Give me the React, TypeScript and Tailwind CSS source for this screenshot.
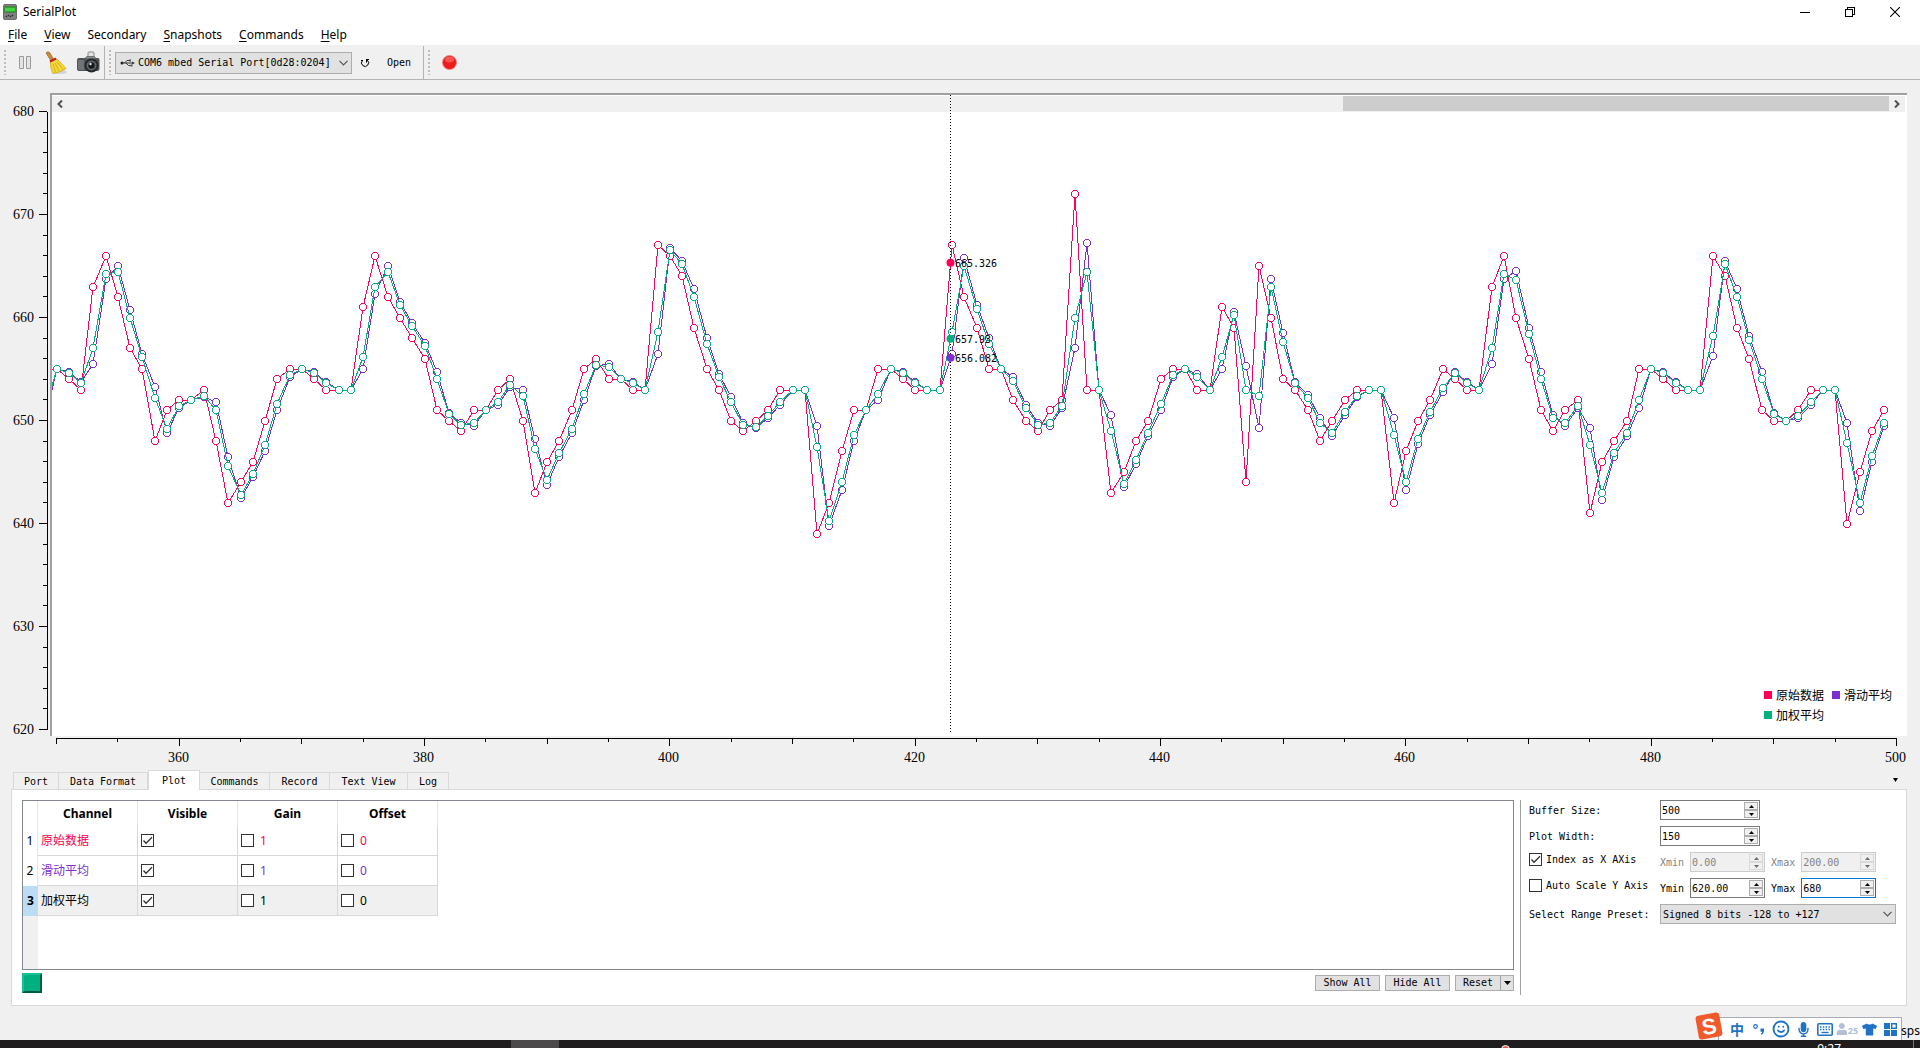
import { useLayoutEffect, useRef, useState } from 'react'
import type { ReactNode } from 'react'
import { FaMicrophone, FaTshirt, FaUser } from 'react-icons/fa'
import { Smile } from 'lucide-react'

const X_MIN = 350
const X_MAX = 500
const Y_MIN = 620
const Y_MAX = 680
const CURSOR_X = 422.88

// Raw readings, the first one belongs to index 348
const raw = [
    648, 655,
    655, 654, 653, 663, 666, 662, 657, 655, 648, 651, 652, 652, 653, 648, 642, 644, 646, 650, 654, 655,
    655, 654, 653, 653, 653, 661, 666, 662, 660, 658, 656, 651, 650, 649, 651, 651, 653, 654, 650, 643,
    646, 648, 651, 655, 656, 654, 654, 653, 653, 667, 666, 664, 659, 655, 653, 650, 649, 650, 651, 653,
    653, 653, 639, 642, 647, 651, 651, 655, 655, 654, 653, 653, 653, 667, 662, 659, 655, 655, 652, 650,
    649, 651, 652, 672, 653, 653, 643, 645, 648, 650, 654, 655, 655, 653, 653, 661, 659, 644, 665, 660,
    654, 653, 651, 648, 650, 652, 653, 653, 653, 642, 647, 650, 652, 655, 654, 653, 653, 663, 666, 660,
    656, 651, 649, 651, 652, 641, 646, 648, 650, 655, 655, 654, 653, 653, 653, 666, 664, 659, 656, 651,
    650, 650, 651, 653, 653, 653, 640, 645, 649, 651
]

const smooth = (weight: number) =>
    raw.slice(1).map((value, i) => ({ x: X_MIN - 1 + i, y: weight * value + (1 - weight) * raw[i] }))

const channels = [
    { name: '原始数据', color: '#ff0056', points: smooth(1), cursor: 665.326 },
    { name: '滑动平均', color: '#7e2dd2', points: smooth(0.25), cursor: 656.082 },
    { name: '加权平均', color: '#00b07f', points: smooth(0.4), cursor: 657.93 }
]

const range = (from: number, to: number, step: number) =>
    Array.from({ length: Math.floor((to - from) / step) + 1 }, (_, i) => from + i * step)

function Plot() {
    const frameRef = useRef<HTMLDivElement>(null)
    const [size, setSize] = useState({ w: 1855, h: 641 })

    useLayoutEffect(() => {
        const el = frameRef.current
        if (!el) return
        const measure = () => setSize({ w: el.clientWidth, h: el.clientHeight })
        measure()
        const observer = new ResizeObserver(measure)
        observer.observe(el)
        return () => observer.disconnect()
    }, [])

    const px = (x: number) => 4.5 + ((x - X_MIN) / (X_MAX - X_MIN)) * (size.w - 15)
    const py = (y: number) => 16.5 + ((Y_MAX - y) / (Y_MAX - Y_MIN)) * (size.h - 23)

    return (
        <section className="grid min-h-0 flex-1 grid-cols-[50px_1fr] grid-rows-[minmax(0,1fr)_34px] pt-[13px] pr-[13px]">
            {/* Y axis */}
            <svg className="h-full w-full overflow-visible" shapeRendering="crispEdges">
                <line x1={47.5} x2={47.5} y1={py(Y_MAX) + 2} y2={py(Y_MIN) + 2} stroke="black" />
                {range(Y_MIN, Y_MAX, 2).map(v => (
                    <line
                        key={v}
                        x1={v % 10 === 0 ? 39 : 43}
                        x2={47}
                        y1={Math.floor(py(v)) + 2.5}
                        y2={Math.floor(py(v)) + 2.5}
                        stroke="black"
                    />
                ))}
                {range(Y_MIN, Y_MAX, 10).map(v => (
                    <text
                        key={v}
                        x={34}
                        y={Math.floor(py(v)) + 7}
                        textAnchor="end"
                        className="font-['Liberation_Serif',serif] text-[14px]"
                    >
                        {v}
                    </text>
                ))}
            </svg>

            <div ref={frameRef} className="relative border-t-2 border-l-2 border-[#a0a0a0] bg-white pt-px">
                {/* Scroll bar */}
                <div className="mr-0.5 flex h-4 items-stretch bg-[#f0f0f0]">
                    <button aria-label="Scroll left" className="grid w-4 place-items-center">
                        <svg width="6" height="8" viewBox="0 0 6 8" fill="none" stroke="#505050" strokeWidth="2">
                            <path d="M5 .5 1.500 4 5 7.500" />
                        </svg>
                    </button>
                    <div className="mb-px flex flex-1 justify-end">
                        <div className="w-[30%] bg-[#cdcdcd]"></div>
                    </div>
                    <button aria-label="Scroll right" className="grid w-4 place-items-center">
                        <svg width="6" height="8" viewBox="0 0 6 8" fill="none" stroke="#505050" strokeWidth="2">
                            <path d="M1 .5 4.500 4 1 7.500" />
                        </svg>
                    </button>
                </div>

                {/* Curves */}
                <svg className="pointer-events-none absolute inset-0 h-full w-full" shapeRendering="crispEdges">
                    {channels.map(ch => (
                        <g key={ch.name} stroke={ch.color}>
                            <polyline
                                fill="none"
                                points={ch.points.map(p => `${Math.round(px(p.x))},${Math.round(py(p.y))}`).join(' ')}
                            />
                            {ch.points.slice(1).map(p => (
                                <circle key={p.x} cx={Math.round(px(p.x))} cy={Math.round(py(p.y))} r="3.5" fill="white" />
                            ))}
                        </g>
                    ))}
                    <line
                        x1={px(CURSOR_X)}
                        x2={px(CURSOR_X)}
                        y1={0}
                        y2={size.h - 4}
                        stroke="black"
                        strokeDasharray="1 2"
                    />
                    {channels.map(ch => (
                        <g key={ch.name}>
                            <circle
                                cx={px(CURSOR_X)}
                                cy={py(ch.cursor)}
                                r="4"
                                fill={ch.color}
                                shapeRendering="geometricPrecision"
                            />
                            <text
                                x={Math.round(px(CURSOR_X)) + 5}
                                y={Math.round(py(ch.cursor)) + 4}
                                className="font-['DejaVu_Sans_Mono',monospace] text-[10px]"
                            >
                                {ch.cursor}
                            </text>
                        </g>
                    ))}
                </svg>

                {/* Legend */}
                <ul className="absolute right-[15px] bottom-[11px] grid grid-cols-[68px_60px] font-['Noto_Sans_CJK_SC',sans-serif] text-[12px] leading-5">
                    {channels.map(ch => (
                        <li key={ch.name} className="flex items-center gap-1">
                            <span className="size-2" style={{ backgroundColor: ch.color }}></span>
                            {ch.name}
                        </li>
                    ))}
                </ul>
            </div>

            {/* X axis */}
            <svg className="col-start-2 h-[34px] w-full overflow-visible" shapeRendering="crispEdges">
                <g transform="translate(2 0)">
                    <line x1={px(X_MIN)} x2={px(X_MAX)} y1={2.5} y2={2.5} stroke="black" />
                    {range(X_MIN, X_MAX, 5).map(v => (
                        <line
                            key={v}
                            x1={Math.floor(px(v)) + 0.5}
                            x2={Math.floor(px(v)) + 0.5}
                            y1={2}
                            y2={v % 20 === 0 ? 10 : v % 10 === 0 ? 8 : 6}
                            stroke="black"
                        />
                    ))}
                    {range(360, X_MAX, 20).map(v => (
                        <text
                            key={v}
                            x={Math.floor(px(v)) - 0.5}
                            y={26}
                            textAnchor="middle"
                            className="font-['Liberation_Serif',serif] text-[14px]"
                        >
                            {v}
                        </text>
                    ))}
                </g>
            </svg>
        </section>
    )
}

function CheckBox({ id, label, defaultChecked }: { id?: string; label?: string; defaultChecked?: boolean }) {
    return (
        <span className="inline-grid size-[13px] shrink-0">
            <input
                type="checkbox"
                id={id}
                aria-label={label}
                defaultChecked={defaultChecked}
                className="peer col-start-1 row-start-1 size-[13px] appearance-none border border-[#333] bg-white"
            />
            <svg
                className="pointer-events-none invisible col-start-1 row-start-1 peer-checked:visible"
                viewBox="0 0 13 13"
                fill="none"
                stroke="#333"
                strokeWidth="1.3"
            >
                <path d="M2.500 6.500 5 9.300 11 3.200" />
            </svg>
        </span>
    )
}

interface SpinBoxProps {
    id: string
    value: string
    width: string
    disabled?: boolean
    focused?: boolean
}

function SpinBox({ id, value, width, disabled, focused }: SpinBoxProps) {
    const [text, setText] = useState(value)
    const decimals = value.includes('.') ? 2 : 0
    const step = (by: number) => setText((Number(text) + by).toFixed(decimals))
    const border = disabled ? 'border-[#ccc] bg-[#f0f0f0]' : focused ? 'border-[#0078d7]' : 'border-[#7a7a7a]'
    const button = disabled
        ? 'grid flex-1 place-items-center border border-[#d9d9d9] text-[#6d6d6d]'
        : 'grid flex-1 place-items-center border border-[#adadad] bg-[#f0f0f0] text-black'

    return (
        <div className={`flex h-5 border ${width} ${border}`}>
            <input
                id={id}
                type="text"
                value={text}
                disabled={disabled}
                onChange={e => setText(e.target.value)}
                className="w-0 min-w-0 flex-1 px-px outline-none disabled:text-[#838383]"
            />
            <div className="flex w-[15px] flex-col py-px pr-px">
                <button className={button} disabled={disabled} aria-label="Increase" onClick={() => step(1)}>
                    <svg width="5" height="3" viewBox="0 0 5 3" fill="currentColor">
                        <path d="M2.500 0 5 3H0z" />
                    </svg>
                </button>
                <button className={button} disabled={disabled} aria-label="Decrease" onClick={() => step(-1)}>
                    <svg width="5" height="3" viewBox="0 0 5 3" fill="currentColor">
                        <path d="M0 0h5L2.500 3z" />
                    </svg>
                </button>
            </div>
        </div>
    )
}

function Chevron() {
    return (
        <svg
            className="pointer-events-none absolute top-1/2 right-1 -translate-y-1/2"
            width="9"
            height="6"
            viewBox="0 0 9 6"
            fill="none"
            stroke="#555"
            strokeWidth="1.2"
        >
            <path d="M.5 .8 4.500 4.800 8.500 .8" />
        </svg>
    )
}

function Grip() {
    return (
        <div className="my-1 w-0.5 shrink-0 self-stretch bg-[repeating-linear-gradient(to_bottom,#bdbdbd_0_2px,transparent_2px_4px)]"></div>
    )
}

function TitleBar() {
    return (
        <header className="flex h-[23px] shrink-0 items-center bg-white pr-5 pl-[3px]">
            <svg width="14" height="16" viewBox="0 0 14 16">
                <rect x=".5" y=".5" width="13" height="15" rx="1.500" fill="#7f8280" stroke="#6b6e6c" />
                <rect x="1.500" y="2.500" width="11" height="6" fill="#1d7a1d" />
                <path d="M2 3.500h10v4H2z" fill="#3fd63f" />
                <path d="M3 12h1v1H3zM5 11h1v1H5zM7 12h1v1H7zM9 11h1v1H9z" fill="#333" stroke="#333" strokeWidth=".6" />
            </svg>
            <h1 className="ml-1.5 flex-1 text-[12px]">SerialPlot</h1>
            <div className="flex items-center gap-[35px] text-black">
                <button aria-label="Minimize">
                    <svg width="10" height="10" viewBox="0 0 10 10" stroke="currentColor" shapeRendering="crispEdges">
                        <path d="M0 5.500h10" />
                    </svg>
                </button>
                <button aria-label="Restore">
                    <svg width="10" height="10" viewBox="0 0 10 10" fill="none" stroke="currentColor" shapeRendering="crispEdges">
                        <path d="M.5 2.500h7v7h-7zM2.500 2.500v-2h7v7h-2" />
                    </svg>
                </button>
                <button aria-label="Close">
                    <svg width="10" height="10" viewBox="0 0 10 10" stroke="currentColor" strokeWidth="1.1">
                        <path d="M0 0 10 10M10 0 0 10" />
                    </svg>
                </button>
            </div>
        </header>
    )
}

function MenuBar() {
    const items = ['File', 'View', 'Secondary', 'Snapshots', 'Commands', 'Help']
    return (
        <nav className="flex h-[23px] shrink-0 items-center gap-[17px] border-b border-[#f0f0f0] bg-white pt-0.5 pl-2 text-[12px]">
            {items.map(item => (
                <button key={item}>
                    {item === 'Secondary' ? (
                        item
                    ) : (
                        <>
                            <span className="underline underline-offset-2">{item[0]}</span>
                            {item.slice(1)}
                        </>
                    )}
                </button>
            ))}
        </nav>
    )
}

function ToolBar() {
    return (
        <div className="flex h-[34px] shrink-0 items-stretch border-b border-[#b4b4b4] pl-1 font-['DejaVu_Sans_Mono',monospace] text-[10px]">
            <Grip />
            <div className="flex w-[99px] items-center border-r border-[#b4b4b4] pl-[13px]">
                <button aria-label="Pause">
                    <svg width="12" height="13" viewBox="0 0 12 13" fill="#e4e4e4" stroke="#9a9a9a">
                        <path d="M.5 .5h4v12h-4zM7.500 .5h4v12h-4z" />
                    </svg>
                </button>
                <button aria-label="Clear" className="ml-[14px]">
                    <svg width="23" height="24" viewBox="0 0 23 24">
                        <ellipse cx="14" cy="21" rx="8" ry="2" fill="#000" opacity=".12" />
                        <path d="M1 2Q3-.5 5 2L9 9 6.500 10.500Z" fill="#c98b3c" stroke="#96601f" strokeWidth=".7" />
                        <path d="M5.500 11 12 8Q17 13 21 17.500 16 21 8 22.500 5 17 5.500 11Z" fill="#f6d83c" stroke="#cfa80e" strokeWidth=".8" />
                        <path d="M8 13 10.500 21M10 12 14 20M12 11 18 18.500" stroke="#c9a416" strokeWidth=".8" fill="none" />
                        <path d="M5 10.500 11 7.500" stroke="#c4201f" strokeWidth="2.500" />
                    </svg>
                </button>
                <button aria-label="Snapshot" className="ml-2">
                    <svg width="24" height="23" viewBox="0 0 24 23">
                        <rect x="12" y="1" width="6" height="6" rx="1" fill="#e2e2e2" stroke="#888" />
                        <path d="M1 9Q1 7 3 7H9L11 5H18L20 7H22Q23.500 7 23.500 9V18Q23.500 20 21 20H4Q1 20 1 18Z" fill="#505457" />
                        <path d="M2 9h6v10H3q-1 0-1-2z" fill="#6f7477" />
                        <path d="M11 5.500h7l1.500 2h-10z" fill="#8a8f92" />
                        <circle cx="15.500" cy="14.500" r="7" fill="#25282a" />
                        <circle cx="15.500" cy="14.500" r="5" fill="#60676c" />
                        <circle cx="15.500" cy="14.500" r="3.200" fill="#15181a" />
                        <circle cx="14.500" cy="13" r="1.200" fill="#dfe8ee" />
                    </svg>
                </button>
            </div>
            <div className="flex items-center border-r border-[#b4b4b4] pr-3 pl-1">
                <Grip />
                <div className="relative ml-1 h-[22px] w-[237px]">
                    <select
                        aria-label="Port"
                        className="h-full w-full appearance-none border border-[#adadad] bg-[#e1e1e1] pl-[22px] outline-none"
                    >
                        <option>COM6 mbed Serial Port[0d28:0204]</option>
                    </select>
                    <svg
                        className="pointer-events-none absolute top-[7px] left-[5px]"
                        width="15"
                        height="8"
                        viewBox="0 0 15 8"
                        fill="none"
                        stroke="#333"
                    >
                        <path d="M2 4h11M4.500 4 7 1.500h2M6 4l2.500 2.500h2" />
                        <circle cx="2" cy="4" r="1.500" fill="#222" stroke="none" />
                        <path d="M12 2.500 15 4 12 5.500z" fill="#333" stroke="none" />
                        <path d="M9 .5h2v2H9zM10.500 5.500h2v2h-2z" fill="#555" stroke="none" />
                    </svg>
                    <Chevron />
                </div>
                <button aria-label="Refresh" className="ml-2">
                    <svg width="10" height="10" viewBox="0 0 10 10" fill="none" stroke="black">
                        <path d="M2.500 2.500A3.500 3.500 0 1 0 7 2M6 1.500H9M6.500 1.500V4.500M1 2.500H3" />
                    </svg>
                </button>
                <button className="ml-[17px]">Open</button>
            </div>
            <div className="flex items-center pl-1">
                <Grip />
                <button aria-label="Record" className="ml-3">
                    <svg width="15" height="15" viewBox="0 0 15 15">
                        <circle cx="7.500" cy="7.500" r="7" fill="#ee1c1c" stroke="#e88080" strokeWidth=".8" />
                        <ellipse cx="7.500" cy="4.500" rx="4.500" ry="3" fill="#ff7a7a" opacity=".6" />
                    </svg>
                </button>
            </div>
        </div>
    )
}

function Tabs() {
    const tabs = [
        { name: 'Port', width: 'w-[46px]' },
        { name: 'Data Format', width: 'w-[89px]' },
        { name: 'Plot', width: 'w-[52px]' },
        { name: 'Commands', width: 'w-[70px]' },
        { name: 'Record', width: 'w-[60px]' },
        { name: 'Text View', width: 'w-[78px]' },
        { name: 'Log', width: 'w-[41px]' }
    ]
    return (
        <div className="flex h-5 shrink-0 items-end pr-[22px] pl-[13px] font-['DejaVu_Sans_Mono',monospace] text-[10px]">
            <div role="tablist" className="flex h-full flex-1 items-end">
                {tabs.map(({ name, width }, i) =>
                    name === 'Plot' ? (
                        <button
                            key={name}
                            role="tab"
                            aria-selected
                            className={`z-10 h-5 border border-b-0 border-[#d9d9d9] bg-white ${width}`}
                        >
                            {name}
                        </button>
                    ) : (
                        <button
                            key={name}
                            role="tab"
                            className={`h-[18px] border-t border-r border-[#d9d9d9] ${i === 0 ? 'border-l' : ''} ${width}`}
                        >
                            {name}
                        </button>
                    )
                )}
            </div>
            <button aria-label="Toggle panel" className="self-center">
                <svg width="5" height="4" viewBox="0 0 5 4">
                    <path d="M0 0h5L2.500 4z" />
                </svg>
            </button>
        </div>
    )
}

function ChannelTable() {
    return (
        <div className="flex h-[170px] border border-[#828790] bg-white">
            {/* strip below the row headers */}
            <div className="h-full bg-[linear-gradient(#fff_0_115px,#f0f0f0_115px)]">
                <table className="border-separate border-spacing-0 text-[12px]">
                    <thead>
                        <tr className="h-[25px]">
                            <th className="w-[15px] border-r border-[#e5e5e5] p-0"></th>
                            {['Channel', 'Visible', 'Gain', 'Offset'].map(h => (
                                <th key={h} className="w-[100px] border-r border-[#e5e5e5] bg-white p-0 font-bold">
                                    {h}
                                </th>
                            ))}
                        </tr>
                    </thead>
                    <tbody>
                        {channels.map((ch, i) => {
                            const selected = i === 2
                            const color = selected ? 'black' : ch.color
                            const cell = selected
                                ? 'border-r border-b border-[#d8d8d8] bg-[#f0f0f0] p-0'
                                : 'border-r border-b border-[#d8d8d8] bg-white p-0'
                            return (
                                <tr key={ch.name} className="h-[30px]">
                                    <th
                                        className={
                                            selected
                                                ? 'bg-[#bcdcf4] p-0 font-bold'
                                                : 'border-r border-[#e5e5e5] bg-white p-0 font-normal'
                                        }
                                    >
                                        {i + 1}
                                    </th>
                                    <td className={cell}>
                                        <div className="pl-[3px]" style={{ color }}>
                                            {ch.name}
                                        </div>
                                    </td>
                                    <td className={cell}>
                                        <div className="flex items-center pl-[3px]">
                                            <CheckBox label={`${ch.name} visible`} defaultChecked />
                                        </div>
                                    </td>
                                    {['1', '0'].map(v => (
                                        <td key={v} className={cell}>
                                            <div className="flex items-center gap-1.5 pl-[3px]" style={{ color }}>
                                                <CheckBox label={`${ch.name} ${v === '1' ? 'gain' : 'offset'}`} />
                                                {v}
                                            </div>
                                        </td>
                                    ))}
                                </tr>
                            )
                        })}
                    </tbody>
                </table>
            </div>
            <div className="-ml-[400px] mt-[115px] flex-1 bg-white"></div>
        </div>
    )
}

function PushButton({ children }: { children: ReactNode }) {
    return <button className="h-4 w-[65px] border border-[#adadad] bg-[#e1e1e1] leading-[14px]">{children}</button>
}

function PlotSettings() {
    return (
        <div className="grid w-[376px] shrink-0 grid-cols-[131px_1fr] content-start items-center gap-y-1.5">
            <label htmlFor="buffer-size">Buffer Size:</label>
            <SpinBox id="buffer-size" value="500" width="w-[100px]" />
            <label htmlFor="plot-width">Plot Width:</label>
            <SpinBox id="plot-width" value="150" width="w-[100px]" />
            <div className="flex items-center gap-1 self-start whitespace-nowrap">
                <CheckBox id="index-x" defaultChecked />
                <label htmlFor="index-x">Index as X AXis</label>
            </div>
            <div className="flex items-center gap-1.5 text-[#838383]">
                <label htmlFor="xmin">Xmin</label>
                <SpinBox id="xmin" value="0.00" width="w-[75px]" disabled />
                <label htmlFor="xmax">Xmax</label>
                <SpinBox id="xmax" value="200.00" width="w-[75px]" disabled />
            </div>
            <div className="flex items-center gap-1 self-start whitespace-nowrap">
                <CheckBox id="auto-y" />
                <label htmlFor="auto-y">Auto Scale Y Axis</label>
            </div>
            <div className="flex items-center gap-1.5">
                <label htmlFor="ymin">Ymin</label>
                <SpinBox id="ymin" value="620.00" width="w-[75px]" />
                <label htmlFor="ymax">Ymax</label>
                <SpinBox id="ymax" value="680" width="w-[75px]" focused />
            </div>
            <label htmlFor="preset">Select Range Preset:</label>
            <div className="relative mr-[9px] h-5">
                <select
                    id="preset"
                    className="h-full w-full appearance-none border border-[#adadad] bg-[#e1e1e1] pl-[2px] outline-none"
                >
                    <option>Signed 8 bits -128 to +127</option>
                </select>
                <Chevron />
            </div>
        </div>
    )
}

function PlotPanel() {
    return (
        <div className="mr-[13px] ml-[11px] -mt-px flex h-[217px] shrink-0 border border-[#d9d9d9] bg-white py-[10px] pr-px pl-[10px]">
            <div className="min-w-0 flex-1">
                <ChannelTable />
                <div className="mt-[3px] flex items-center justify-between font-['DejaVu_Sans_Mono',monospace] text-[10px]">
                    <button
                        aria-label="Channel color"
                        className="size-5 border-2 border-t-[#12c491] border-r-[#00583f] border-b-[#00583f] border-l-[#12c491] bg-[#00b07f]"
                    ></button>
                    <div className="flex gap-[5px]">
                        <PushButton>Show All</PushButton>
                        <PushButton>Hide All</PushButton>
                        <div className="flex h-4 w-[59px] border border-[#adadad] bg-[#e1e1e1] leading-[14px]">
                            <button className="flex-1 border-r border-[#a0a0a0]">Reset</button>
                            <button aria-label="Reset options" className="grid w-3 place-items-center">
                                <svg width="7" height="4" viewBox="0 0 7 4">
                                    <path d="M0 0h7L3.500 4z" />
                                </svg>
                            </button>
                        </div>
                    </div>
                </div>
            </div>
            <div className="ml-[6px] flex border-l border-[#a0a0a0] pl-2 font-['DejaVu_Sans_Mono',monospace] text-[10px]">
                <PlotSettings />
            </div>
        </div>
    )
}

// Input method toolbar floating over the status bar
function ImeBar() {
    return (
        <div className="flex items-end">
            <svg className="z-10 -mr-[5px]" width="28" height="28" viewBox="0 0 28 28">
                <g transform="rotate(-10 14 14)">
                    <rect x="2" y="2" width="24" height="24" rx="3" fill="#f0592b" />
                    <text
                        x="14"
                        y="22"
                        textAnchor="middle"
                        fill="white"
                        className="font-['Liberation_Sans',sans-serif] text-[22px] font-bold"
                    >
                        S
                    </text>
                </g>
            </svg>
            <div className="flex h-[23px] w-[184px] items-center border border-b-0 border-[#a9acb5] bg-white pl-[7px] text-[#1f73c7]">
                <span className="w-[22px] text-center font-['Noto_Sans_CJK_SC',sans-serif] text-[14px] leading-5 font-bold">中</span>
                <span className="grid w-[22px] place-items-center">
                    <svg width="12" height="12" viewBox="0 0 12 12">
                        <circle cx="2.500" cy="3.500" r="1.800" fill="none" stroke="currentColor" strokeWidth="1.2" />
                        <path d="M7.500 5.500h3.500v3q-.5 2.500-3 3.200v-1.200q1.200-.6 1.300-1.700H7.500z" fill="currentColor" />
                    </svg>
                </span>
                <span className="grid w-[22px] place-items-center">
                    <Smile size={18} strokeWidth={2.5} />
                </span>
                <span className="grid w-[22px] place-items-center">
                    <FaMicrophone size={15} />
                </span>
                <span className="grid w-[22px] place-items-center">
                    <svg width="16" height="13" viewBox="0 0 16 13" fill="none" stroke="currentColor">
                        <rect x=".8" y=".8" width="14.400" height="11.400" rx="1" strokeWidth="1.600" />
                        <path d="M3 4h10M3 6.500h10" strokeWidth="1.400" strokeDasharray="1.500 1.300" />
                        <path d="M4.500 9.500h7" strokeWidth="1.400" />
                    </svg>
                </span>
                <span className="flex w-[22px] items-end justify-center text-[#b3bfd3]">
                    <FaUser size={12} />
                    <span className="text-[9px] leading-2 font-bold">25</span>
                </span>
                <span className="grid w-[22px] place-items-center">
                    <FaTshirt size={15} />
                </span>
                <svg className="ml-1" width="13" height="13" viewBox="0 0 13 13" fill="currentColor">
                    <path d="M0 0h6v6H0zM0 7h6v6H0zM7 7h6v6H7z" />
                    <path d="M7.700 .7h4.600v4.600H7.700z" fill="none" stroke="currentColor" strokeWidth="1.400" />
                </svg>
            </div>
        </div>
    )
}

export default function App() {
    return (
        <div className="flex h-screen min-h-[640px] flex-col overflow-hidden bg-[#f0f0f0] font-['Noto_Sans','Noto_Sans_CJK_SC',sans-serif] text-black">
            <TitleBar />
            <MenuBar />
            <ToolBar />
            <Plot />
            <Tabs />
            <PlotPanel />

            {/* Status bar */}
            <footer className="flex h-[34px] shrink-0 items-end justify-end">
                <ImeBar />
                <span className="-ml-px text-[12px]">sps</span>
            </footer>

            {/* Desktop taskbar, only its top edge is on screen */}
            <div className="flex h-2 shrink-0 justify-between overflow-hidden bg-[#1f1d1e] pr-[6px]">
                <div className="ml-[511px] w-12 bg-[#4b494a]"></div>
                <div className="flex items-start">
                    <span className="mt-[5px] mr-[307px] size-[9px] rounded-full border border-white bg-[#e05a5a]"></span>
                    <span className="mr-[72px] pt-[3px] text-[12px] leading-3 text-white">9:27</span>
                    <span className="h-full w-px bg-[#77777a]"></span>
                </div>
            </div>
        </div>
    )
}
